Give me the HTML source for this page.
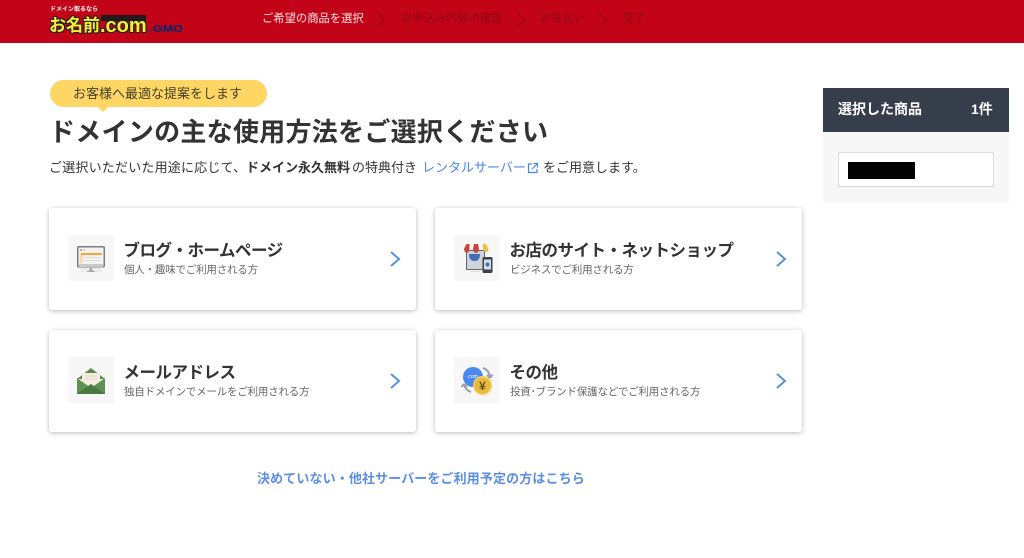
<!DOCTYPE html>
<html lang="ja"><head><meta charset="utf-8">
<style>
html,body{margin:0;padding:0;background:#fff}
body{width:1024px;height:558px;overflow:hidden;position:relative;font-family:"Liberation Sans","Noto Sans CJK JP",sans-serif;color:#333}
.a{position:absolute;white-space:nowrap}
.hd{left:0;top:0;width:1024px;height:43px;background:#c30418}
.st{top:11px;font-size:11.3px;line-height:16px;color:#8e0313}
.lg{font-weight:700;color:#f6ee36;text-shadow:1px 0 0 #222,-1px 0 0 #222,0 1px 0 #222,0 -1px 0 #222,1px 1px 0 #222,-1px 1px 0 #222,1px -1px 0 #222,-1px -1px 0 #222}
.card{position:absolute;width:367px;height:102px;background:#fff;border-radius:3px;box-shadow:0 1px 5px rgba(0,0,0,.28)}
.ib{position:absolute;left:19px;top:27px;width:46px;height:46px;background:#f7f7f7;border-radius:2px}
.t{position:absolute;left:74.5px;top:31px;font-size:16.5px;line-height:24px;font-weight:700;color:#333;white-space:nowrap;letter-spacing:-.5px}
.s{position:absolute;left:75px;top:54px;font-size:10.5px;line-height:16px;color:#666;white-space:nowrap;letter-spacing:-.2px}
.ar{position:absolute;left:339px;top:42px}
.p{top:159px;font-size:13px;line-height:18px;color:#333}
</style></head><body>
<div class="a hd"></div>
<div class="a" style="left:50px;top:6px;font-size:6px;line-height:8px;font-weight:700;color:#fff">ドメイン取るなら</div>
<div class="a lg" style="left:49px;top:16px;font-size:17px;line-height:20px">お名前</div>
<div class="a lg" style="left:100px;top:16px;font-size:20px;line-height:20px">.com</div>
<div class="a" style="left:101px;top:15px;width:45px;height:6px;background:#221a1a"></div>
<div class="a" style="left:147px;top:25px;font-size:10px;line-height:10px;font-weight:700;color:#1f2260;-webkit-text-stroke:.3px #1f2260"><span style="font-size:5px;color:#5a2a3a;-webkit-text-stroke:0">by</span><span style="display:inline-block;transform:scaleX(1.25);transform-origin:0 50%">GMO</span></div>

<div class="a st" style="left:262px;color:#fbe3e5">ご希望の商品を選択</div>
<div class="a st" style="left:401px">お申込み内容の確認</div>
<div class="a st" style="left:540px">お支払い</div>
<div class="a st" style="left:623px">完了</div>
<svg class="a" style="left:370px;top:8px" width="300" height="22" fill="none" stroke="#8e0313" stroke-width="1">
<path d="M6 4l9 7.500-9 7.500M146 4l9 7.500-9 7.500M228 4l9 7.500-9 7.500"/></svg>

<div class="a" style="left:50px;top:80px;width:217px;height:27px;border-radius:14px;background:#fdd663"></div>
<div class="a" style="left:97px;top:106px;width:0;height:0;border-left:6px solid transparent;border-right:6px solid transparent;border-top:6px solid #fdd663"></div>
<div class="a" style="left:73px;top:85px;font-size:13px;line-height:18px;color:#443e2e">お客様へ最適な提案をします</div>

<div class="a" style="left:49px;top:115px;font-size:26px;line-height:34px;font-weight:700;color:#333;letter-spacing:.28px">ドメインの主な使用方法をご選択ください</div>
<div class="a p" style="left:49px;letter-spacing:.2px">ご選択いただいた用途に応じて、</div>
<div class="a p" style="left:246px;font-weight:700">ドメイン永久無料</div>
<div class="a p" style="left:352px">の特典付き</div>
<div class="a p" style="left:422px;color:#4a86e8">レンタルサーバー</div>
<svg class="a" style="left:527px;top:162px" width="12" height="12" viewBox="0 0 12 12" fill="none" stroke="#4a86e8" stroke-width="1.200"><path d="M5 2H1.500v8.500H10V7M6.500 1.500h4v4M10.500 1.500L5 7"/></svg>
<div class="a p" style="left:543px">をご用意します。</div>

<div class="card" style="left:49px;top:208px"><div class="ib">
<svg width="46" height="46"><path d="M14 32h18l3 5H11z" fill="#ececec"/><rect x="9.750" y="11.750" width="26.500" height="20" rx="1" fill="#f2f2f2" stroke="#7d7d7d" stroke-width="1.500"/><rect x="11" y="29" width="24" height="3" fill="#c9c9c9"/><rect x="12" y="14" width="2" height="2" fill="#e59a9a"/><rect x="15" y="14" width="2" height="2" fill="#e8d27a"/><rect x="13" y="18" width="21" height="2" fill="#f5a53c"/><rect x="12" y="20" width="3" height="8" fill="#f8d9b0"/><rect x="16" y="22" width="17" height="1" fill="#ddd"/><rect x="16" y="25" width="17" height="1" fill="#ddd"/><path d="M22 33h2l1 3h2v1h-8v-1h2z" fill="#aaa"/></svg>
</div><div class="t">ブログ・ホームページ</div><div class="s">個人・趣味でご利用される方</div>
<svg class="ar" width="14" height="18" fill="none" stroke="#5a8fe8" stroke-width="2"><path d="M3 2l8 7-8 7"/></svg></div>

<div class="card" style="left:435px;top:208px"><div class="ib">
<svg width="46" height="46"><rect x="12.500" y="15.500" width="18" height="19" fill="#cfd4dc" stroke="#666"/><path d="M15 19h11q0 7-5.500 7T15 19z" fill="#3d6fb4"/><path d="M17 36h8l1 1h-10z" fill="#ddd"/><path d="M10 14l2.500-5h3v5q-1 4-2.800 4T10 14z" fill="#c8453a"/><path d="M19 14l1-5h4l1 5q-.5 4-3 4t-3-4z" fill="#c8453a"/><path d="M29 9h3l2.500 5q-.5 3-2.500 3t-3-3z" fill="#efc040"/><rect x="28.500" y="22" width="10" height="16" rx="1.500" fill="#3b4149"/><rect x="30" y="24.500" width="7" height="10" fill="#d8dee6"/><circle cx="33.500" cy="29.500" r="2" fill="#3d6fb4"/></svg>
</div><div class="t">お店のサイト・ネットショップ</div><div class="s">ビジネスでご利用される方</div>
<svg class="ar" width="14" height="18" fill="none" stroke="#5a8fe8" stroke-width="2"><path d="M3 2l8 7-8 7"/></svg></div>

<div class="card" style="left:49px;top:330px"><div class="ib">
<svg width="46" height="46"><path d="M9 22L23 11l14 11z" fill="#5b8a50"/><path d="M14 16h18v9l-9 6-9-6z" fill="#f3eedd"/><path d="M17 19h12M17 22h12" stroke="#ddd6c0"/><path d="M9 21l14 10 14-10v16H9z" fill="#5f9054"/><path d="M9 37l14-10 14 10z" fill="#4a7841"/></svg>
</div><div class="t">メールアドレス</div><div class="s">独自ドメインでメールをご利用される方</div>
<svg class="ar" width="14" height="18" fill="none" stroke="#5a8fe8" stroke-width="2"><path d="M3 2l8 7-8 7"/></svg></div>

<div class="card" style="left:435px;top:330px"><div class="ib">
<svg width="46" height="46"><circle cx="19" cy="20" r="10" fill="#4a88ec"/><text x="13" y="21" font-size="5" font-style="italic" fill="#fff" font-family="Liberation Sans">.com</text><path d="M29 11q6 2 7 9M36 21l-3-3M36 21l2.500-3.500M10 27q1 6 7 8M10 27l-2.500 3M10 27l3 3" fill="none" stroke="#9aa1aa" stroke-width="2"/><circle cx="28.500" cy="28.500" r="8.800" fill="#e8b93c" stroke="#f2d266" stroke-width="1.500"/><text x="28.500" y="33" text-anchor="middle" font-size="12" font-weight="700" fill="#6b5320" font-family="Liberation Sans">¥</text></svg>
</div><div class="t">その他</div><div class="s">投資･ブランド保護などでご利用される方</div>
<svg class="ar" width="14" height="18" fill="none" stroke="#5a8fe8" stroke-width="2"><path d="M3 2l8 7-8 7"/></svg></div>

<div class="a" style="left:257px;top:470px;font-size:13px;line-height:18px;font-weight:700;color:#5b8fe6;letter-spacing:.12px">決めていない・他社サーバーをご利用予定の方はこちら</div>

<div class="a" style="left:823px;top:88px;width:186px;height:114px;background:#f7f7f7"></div>
<div class="a" style="left:823px;top:88px;width:186px;height:44px;background:#363e4c"></div>
<div class="a" style="left:838px;top:100px;font-size:14px;line-height:18px;font-weight:700;color:#fff">選択した商品</div>
<div class="a" style="left:971px;top:100px;font-size:14px;line-height:18px;font-weight:700;color:#fff">1件</div>
<div class="a" style="left:838px;top:152px;width:154px;height:33px;background:#fff;border:1px solid #ddd"></div>
<div class="a" style="left:848px;top:162px;width:67px;height:17px;background:#000"></div>
</body></html>
